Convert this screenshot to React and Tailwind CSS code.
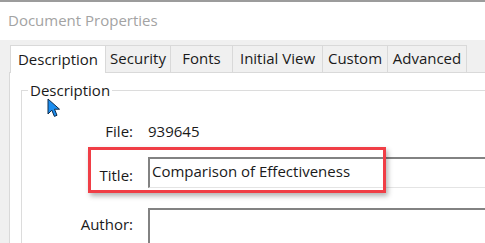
import React from 'react';

const tabs = [
  { label: 'Security', w: 'w-[65px]' },
  { label: 'Fonts', w: 'w-[62px]' },
  { label: 'Initial View', w: 'w-[90px]' },
  { label: 'Custom', w: 'w-[65px]' },
  { label: 'Advanced', w: 'w-[79px]' },
];

function Cursor() {
  return (
    <svg className="absolute left-[47px] top-[98px]" width="14" height="20" viewBox="0 0 14 20">
      <path d="M1 1 L1 16 L4.8 12.2 L7.4 18.4 L10 17.3 L7.5 11.2 L12.5 11.2 Z" fill="#1c8ef0" stroke="#0d2a4a" strokeWidth="1" strokeLinejoin="round" />
    </svg>
  );
}

export default function App() {
  return (
    <div
      className="relative w-[485px] h-[243px] overflow-hidden bg-[#f0f0f0] flex flex-col text-[15px] text-[#1a1a1a]"
      style={{ fontFamily: '"Segoe UI", "Open Sans", "Noto Sans", sans-serif' }}
    >
      {/* window title */}
      <div className="h-[40px] shrink-0 bg-white border-t-2 border-[#9c9c9c] flex items-center pl-[8px] pb-[2px] text-[#a3a3a3]">
        Document Properties
      </div>

      {/* tab strip */}
      <div className="h-[32px] shrink-0 flex items-end pl-[10px]">
        <div className="relative z-10 w-[96px] h-[28px] -mb-px bg-white border border-b-0 border-[#d9d9d9] flex items-center justify-center pb-[1px]">
          Description
        </div>
        {tabs.map((t) => (
          <div
            key={t.label}
            className={`${t.w} h-[27px] bg-[#f0f0f0] border-t border-r border-[#d9d9d9] flex items-center justify-center pb-[1px]`}
          >
            {t.label}
          </div>
        ))}
      </div>

      {/* tab page */}
      <div className="flex-1 ml-[9px] bg-white border-l border-t border-[#d9d9d9] pl-[11px] pt-[7px]">
        <fieldset className="border-l border-t border-[#dcdcdc] h-[200px]">
          <legend className="ml-[6px] px-[2px] leading-[20px]">Description</legend>
          <div className="flex flex-col">
            <div className="flex items-center h-[20px] mt-[21px]">
              <div className="w-[111px] text-right">File:</div>
              <div className="ml-[15px]">939645</div>
            </div>
            <div className="flex items-center mt-[16px]">
              <div className="w-[111px] text-right pt-[5px]">Title:</div>
              <div className="ml-[15px] flex-1 h-[31px] border-t-2 border-l-2 border-[#828282] border-b border-b-[#e4e4e4] flex items-center pl-[2px] pb-[3px]">
                Comparison of Effectiveness
              </div>
            </div>
            <div className="flex items-start mt-[20px]">
              <div className="w-[111px] text-right pt-[5px]">Author:</div>
              <div className="ml-[15px] flex-1 h-[40px] border-t-2 border-l-2 border-[#828282]" />
            </div>
          </div>
        </fieldset>
      </div>

      {/* highlight overlay */}
      <div className="absolute left-[88px] top-[147px] w-[298px] h-[46px] border-[3px] border-[#f03e46] shadow-[2px_3px_5px_rgba(0,0,0,0.3)]" />

      <Cursor />
    </div>
  );
}
